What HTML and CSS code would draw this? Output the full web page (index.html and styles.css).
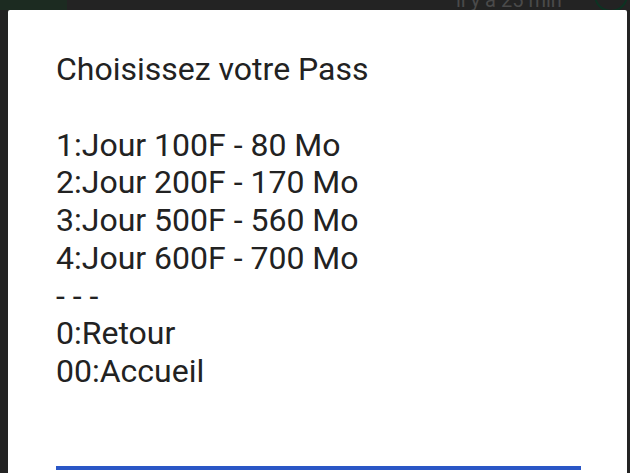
FILE: index.html
```html
<!DOCTYPE html>
<html lang="fr">
<head>
<meta charset="utf-8">
<link rel="stylesheet" href="styles.css">
</head>
<body>
<div class="backdrop">
  <div class="bg-avatar"></div>
  <div class="bg-time">il y a 25 min</div>
  <div class="bg-circle"></div>
</div>
<div class="dialog">
  <div class="message">
    <div class="line">Choisissez votre Pass</div>
    <div class="line">&nbsp;</div>
    <div class="line">1:Jour 100F - 80 Mo</div>
    <div class="line">2:Jour 200F - 170 Mo</div>
    <div class="line">3:Jour 500F - 560 Mo</div>
    <div class="line">4:Jour 600F - 700 Mo</div>
    <div class="line">- - -</div>
    <div class="line">0:Retour</div>
    <div class="line">00:Accueil</div>
  </div>
  <div class="input-line"></div>
</div>
</body>
</html>
```

FILE: styles.css
```css
html, body {
  margin: 0;
  padding: 0;
  width: 630px;
  height: 473px;
  overflow: hidden;
  background: #232323;
  font-family: Roboto, "Noto Sans", sans-serif;
}
body {
  position: relative;
  padding: 10px 3px 0 8px;
  box-sizing: border-box;
}
.backdrop {
  position: absolute;
  inset: 0;
  z-index: 0;
}
.bg-avatar {
  position: absolute;
  left: 0;
  top: 0;
  width: 67px;
  height: 10px;
  background: #1c2b21;
}
.bg-time {
  position: absolute;
  left: 456px;
  top: -12px;
  font-size: 20px;
  line-height: 24px;
  color: #4a4a4a;
}
.bg-circle {
  position: absolute;
  left: 594px;
  top: -22px;
  width: 30px;
  height: 30px;
  border: 2px solid #0d3322;
  border-radius: 50%;
}
.dialog {
  position: relative;
  z-index: 1;
  background: #ffffff;
  border-radius: 2px;
  height: 480px;
  padding: 41px 46px 0 48px;
  box-sizing: border-box;
}
.message {
  font-size: 32px;
  color: #222222;
}
.line {
  height: 37.75px;
  line-height: 37.75px;
}
.input-line {
  margin-top: 75px;
  height: 4px;
  background: #2a56c6;
}
```
